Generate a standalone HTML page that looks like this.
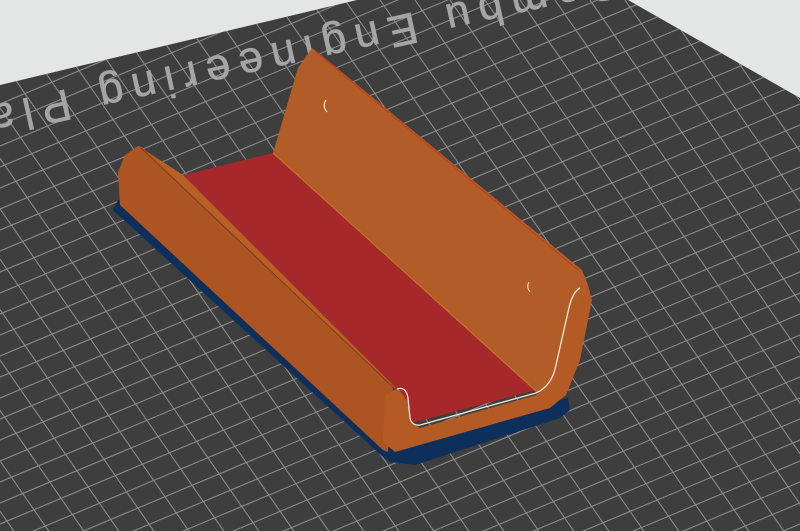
<!DOCTYPE html>
<html><head><meta charset="utf-8"><style>
html,body{margin:0;padding:0;width:800px;height:531px;overflow:hidden;background:#e4e5e5}
svg{display:block;position:absolute;left:0;top:0}
</style></head><body>
<svg id="s" width="800" height="531" viewBox="0 0 800 531" xmlns="http://www.w3.org/2000/svg">
<defs>
<clipPath id="plate"><polygon points="0,85 357,0 628,0 800,98 800,531 0,531"/></clipPath>
</defs>
<polygon points="0,85 357,0 628,0 800,98 800,531 0,531" fill="#3d3e3d"/>
<g id="grid" clip-path="url(#plate)" stroke="#8a8a8a" stroke-width="1.1" fill="none"></g>
<g clip-path="url(#plate)">
<text x="0" y="0" transform="translate(270,44) rotate(167.5)" text-anchor="middle" font-family="'Liberation Sans',sans-serif" font-size="44" letter-spacing="9" fill="#a5a5a5" stroke="#a5a5a5" stroke-width="0.6">Bambu Engineering Plate</text>
</g>
<!-- raft -->
<polygon points="118,200 130,198 400,450 560,400 568,398 570,410 560,418 415,465 390,462 382,456 113,210" fill="#0c2f5b"/>
<!-- floor -->
<polygon points="183,175 273,153 536,390 412,423 405,400 398,390" fill="#a6282a"/>
<!-- left wall inner strip -->
<polygon points="140,147 183,175 398,390 393,387" fill="#b65f27"/>
<!-- left wall outer face -->
<polygon points="118,172 125,155 138,146 142,147 393,387 388,452 383,450 120,205" fill="#ad5522"/>
<line x1="141" y1="148" x2="393" y2="387" stroke="#7a3616" stroke-width="0.8"/>
<!-- back wall -->
<polygon points="273,153 298,68 312,48 320,54 582,270 588,285 575,360 560,388 536,392" fill="#b25d27"/>
<line x1="316" y1="52" x2="578" y2="270" stroke="#c43a20" stroke-width="1"/>
<line x1="273" y1="153" x2="536" y2="391" stroke="#c2772e" stroke-width="1"/>
<!-- front end face -->
<polygon points="385,395 398,388 408,402 410,420 420,428 536,395 552,382 560,360 572,310 588,285 592,300 580,360 566,395 550,408 395,452 383,442" fill="#b35a25"/>
<path d="M397,389 Q406,386 408,398 L410,418 Q412,426 420,425 L536,393 Q552,386 556,365 L568,312 Q572,292 580,288" stroke="#f4e6d8" stroke-width="1.3" fill="none"/>
<path d="M326,100 q-4,6 1,12" stroke="#f4e6d8" stroke-width="1.2" fill="none"/>
<path d="M529,282 q-3,5 1,10" stroke="#f4e6d8" stroke-width="1" fill="none"/>
</svg>
<script>
var g=document.getElementById('grid'),o='';
for(var c=-400;c<900;c+=21){o+='<line x1="-50" y1="'+(c+21)+'" x2="850" y2="'+(c-357)+'"/>';}
for(var d=-600;d<900;d+=35){o+='<line x1="'+d+'" y1="0" x2="'+(d+368.75)+'" y2="531"/>';}
g.innerHTML=o;
</script>
</body></html>
